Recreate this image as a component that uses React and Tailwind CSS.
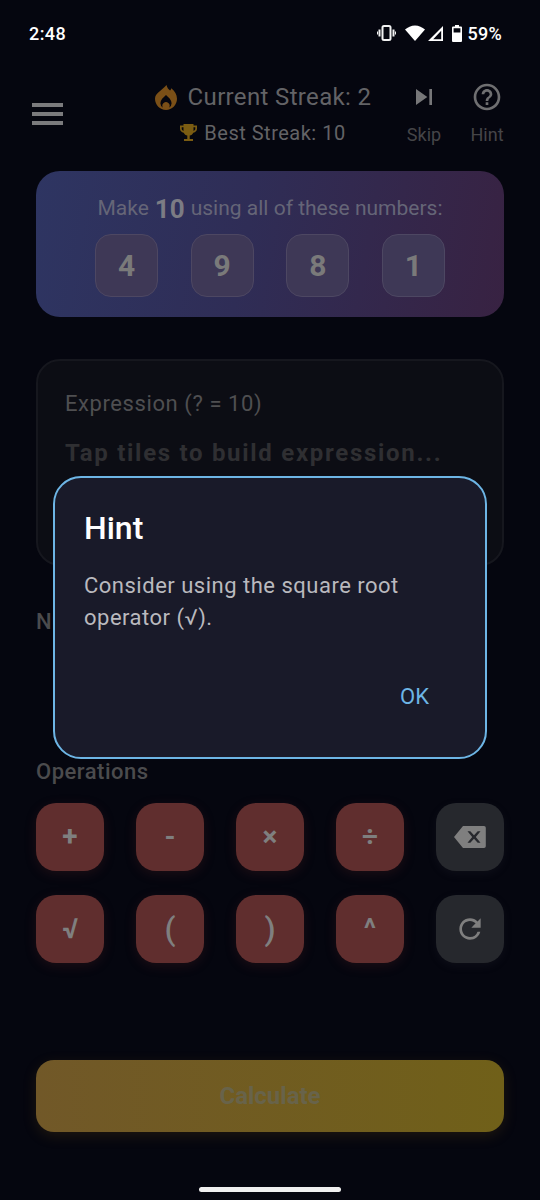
import React from "react";

const Tile = ({ children, gray }) => (
  <div className={`w-[68px] h-[68px] rounded-[20px] flex items-center justify-center text-[28px] font-bold text-[#7f7f7f] ${gray ? "bg-[#26282d] shadow-[0_3px_10px_rgba(70,70,80,0.12)]" : "bg-[#602e2e] shadow-[0_3px_12px_rgba(110,40,40,0.22)]"}`}>
    {children}
  </div>
);

const Num = ({ children }) => (
  <div className="w-[63px] h-[63px] rounded-[16px] border border-[#4d4762] bg-[#3e3856] flex items-center justify-center text-[30px] font-bold text-[#7a7a7a]">
    {children}
  </div>
);

export default function App() {
  return (
    <div className="relative w-[540px] h-[1200px] overflow-hidden bg-[#05060f] font-['Roboto',sans-serif]">
      {/* status bar */}
      <div className="h-[66px] pl-[29px] pr-[38px] flex items-center justify-between text-white">
        <span className="text-[18px] font-medium tracking-[0.4px]">2:48</span>
        <div className="flex items-center">
          <svg width="19" height="16" viewBox="0 0 19 16" className="mr-[9px]" fill="none" stroke="#f2f2f2">
            <rect x="5.5" y="1" width="8" height="14" rx="1.5" strokeWidth="2" />
            <path d="M2.5 4.5v7M16.5 4.5v7" strokeWidth="2" />
            <path d="M0.5 6.5v3M18.5 6.5v3" strokeWidth="1" />
          </svg>
          <svg width="20" height="16" viewBox="0 0 20 16" className="mr-[2px]">
            <path d="M0 4.6C2.7 2 6.2.4 10 .4s7.3 1.600 10 4.200L10 16z" fill="#fff" />
          </svg>
          <svg width="17" height="17" viewBox="0 0 17 17" className="mr-[8px]">
            <path d="M16 1v15H1z M14.200 5.800L6.200 14.200h8z" fill="#fff" fillRule="evenodd" />
          </svg>
          <svg width="10" height="17" viewBox="0 0 10 17" className="mr-[5px]">
            <path d="M3 0h4v1.500h2a1 1 0 0 1 1 1V16a1 1 0 0 1-1 1H1a1 1 0 0 1-1-1V2.500a1 1 0 0 1 1-1h2z M1.600 3.200v4.300h6.800V3.200z" fill="#fff" fillRule="evenodd" />
          </svg>
          <span className="text-[18px] font-medium tracking-[0.3px]">59%</span>
        </div>
      </div>

      {/* header */}
      <div className="h-[105px] pl-[32px] pr-[36px] flex items-start">
        <div className="mt-[37px] w-[31px] flex flex-col gap-[5.5px]">
          <div className="h-[3.5px] bg-[#7b7b7d]" />
          <div className="h-[3.5px] bg-[#7b7b7d]" />
          <div className="h-[3.5px] bg-[#7b7b7d]" />
        </div>
        <div className="w-[280px] ml-[60px] mt-[16px] flex flex-col items-center">
          <div className="flex items-center h-[30px]">
            <svg width="22" height="25" viewBox="0 0 22 25" className="mr-[11px]">
              <path fillRule="evenodd" fill="#7a4f17" d="M11.500 0c.8 3 2 4.400 3.600 5.400.6-.6 1-1.300 1.200-2.100C19.800 6 22 9.800 22 13.800 22 20 17 25 11 25S0 20 0 13.800C0 8 6.500 6 11.500 0zM11 10c-2.800 2.500-5.600 5-5.600 8.200a5.600 5.600 0 0 0 2.600 4.600 3.600 3.600 0 1 1 6 0 5.600 5.600 0 0 0 2.600-4.600C16.600 15 13.800 12.500 11 10z" />
            </svg>
            <span className="text-[24px] text-[#636366] tracking-[0.35px]">Current Streak: 2</span>
          </div>
          <div className="flex items-center h-[28px] mt-[7px]">
            <svg width="17" height="18" viewBox="0 0 17 18" className="mr-[7px]">
              <path fillRule="evenodd" fill="#7b5c12" d="M3.500 0h10v1.500H17v3.300c0 2-1.500 3.600-3.700 3.900-.7 1.500-2 2.600-3.600 2.900V15H13v2H4v-2h3.300v-3.400c-1.600-.3-2.900-1.400-3.600-2.900C1.500 8.400 0 6.800 0 4.800V1.500h3.500zM1.700 3.200v1.600c0 1 .7 1.900 1.800 2.200V3.200zM13.500 3.200V7c1.100-.3 1.800-1.200 1.800-2.200V3.200z" />
            </svg>
            <span className="text-[20px] text-[#636366] tracking-[0.5px]">Best Streak: 10</span>
          </div>
        </div>
        <div className="ml-[3px] w-[36px] mt-[15px] flex flex-col items-center">
          <svg width="32" height="32" viewBox="0 0 24 24">
            <path d="M6 18l8.500-6L6 6v12zM16 6v12h2V6h-2z" fill="#777779" />
          </svg>
          <span className="mt-[10px] text-[18px] leading-[24px] text-[#454548]">Skip</span>
        </div>
        <div className="ml-[28px] w-[34px] mt-[15px] flex flex-col items-center">
          <svg width="32" height="32" viewBox="0 0 24 24">
            <path d="M11 18h2v-2h-2v2zm1-16C6.480 2 2 6.480 2 12s4.480 10 10 10 10-4.480 10-10S17.520 2 12 2zm0 18c-4.410 0-8-3.590-8-8s3.590-8 8-8 8 3.590 8 8-3.590 8-8 8zm0-14c-2.210 0-4 1.790-4 4h2c0-1.100.9-2 2-2s2 .9 2 2c0 2-3 1.750-3 5h2c0-2.250 3-2.500 3-5 0-2.210-1.790-4-4-4z" fill="#6f6f71" />
          </svg>
          <span className="mt-[10px] text-[18px] leading-[24px] text-[#454548]">Hint</span>
        </div>
      </div>

      <div className="px-[36px]">
        {/* target card */}
        <div className="h-[146px] rounded-[24px] bg-[linear-gradient(100deg,#2e3562_0%,#2f2d56_45%,#382242_100%)] pt-[20px] flex flex-col items-center">
          <div className="h-[36px] flex items-center text-[21px] text-[#656577]">
            <span>Make</span>
            <span className="mx-[6px] text-[26px] font-bold text-[#7c7c84]">10</span>
            <span>using all of these numbers:</span>
          </div>
          <div className="mt-[7px] flex gap-[32.6px]">
            <Num>4</Num>
            <Num>9</Num>
            <Num>8</Num>
            <Num>1</Num>
          </div>
        </div>

        {/* expression card */}
        <div className="mt-[42px] h-[207px] rounded-[24px] border-2 border-[#16171e] bg-[#0c0d14] pl-[27px] pt-[29px]">
          <div className="text-[22px] leading-[28px] tracking-[0.58px] text-[#4f4f51]">Expression (? = 10)</div>
          <div className="mt-[21px] text-[24px] leading-[28px] font-bold tracking-[1.7px] text-[#2f2f32]">Tap tiles to build expression...</div>
        </div>

        <div className="mt-[42px] text-[22px] leading-[28px] tracking-[0.5px] text-[#4b4b4d] font-medium">Numbers</div>

        {/* operations */}
        <div className="mt-[122px] text-[22px] leading-[28px] tracking-[0.5px] text-[#4b4b4d] font-medium">Operations</div>
        <div className="mt-[17px] grid grid-cols-5 gap-x-[32px] gap-y-[24px]">
          <Tile>+</Tile>
          <Tile>-</Tile>
          <Tile>×</Tile>
          <Tile>÷</Tile>
          <Tile gray>
            <svg width="32" height="24" viewBox="0 0 32 24">
              <path fillRule="evenodd" fill="#7f7f7f" d="M9 1h21a1.800 1.800 0 0 1 1.800 1.800v18.400A1.800 1.800 0 0 1 30 23H9L0 12zM13.500 6.300L18.200 12l-4.700 5.700h2.800L20 13.800l3.700 3.900h2.800L21.800 12l4.700-5.700h-2.800L20 10.200l-3.700-3.900z" />
            </svg>
          </Tile>
          <Tile>√</Tile>
          <Tile><span className="text-[32px] font-medium">(</span></Tile>
          <Tile><span className="text-[32px] font-medium">)</span></Tile>
          <Tile>^</Tile>
          <Tile gray>
            <svg width="32" height="32" viewBox="0 0 24 24">
              <path fill="#7f7f7f" d="M17.650 6.350A7.958 7.958 0 0 0 12 4c-4.420 0-7.990 3.580-7.990 8s3.570 8 7.990 8c3.730 0 6.840-2.550 7.730-6h-2.080A5.990 5.990 0 0 1 12 18c-3.310 0-6-2.690-6-6s2.690-6 6-6c1.660 0 3.140.69 4.220 1.780L13 11h7V4l-2.350 2.350z" />
            </svg>
          </Tile>
        </div>

        {/* calculate */}
        <div className="mt-[97px] h-[72px] rounded-[18px] bg-[linear-gradient(90deg,#715828,#706019)] shadow-[0_4px_14px_rgba(130,90,20,0.2)] flex items-center justify-center text-[24px] font-bold text-[#68634a]">
          Calculate
        </div>
      </div>

      {/* home indicator */}
      <div className="absolute left-[199px] top-[1187px] w-[142px] h-[5px] rounded-full bg-[#f0f0f0]" />

      {/* dialog */}
      <div className="absolute left-[53px] top-[476px] w-[434px] h-[283px] rounded-[28px] border-[2.5px] border-[#6db5e5] bg-[#191a29] pl-[29px] pr-[24px] pt-[29px]">
        <div className="text-[32px] leading-[42px] font-medium text-white">Hint</div>
        <div className="mt-[21px] text-[22px] leading-[32px] tracking-[0.5px] text-[#b9b9be]">
          Consider using the square root<br />operator (√).
        </div>
        <div className="absolute right-[56px] top-[205px] text-[22px] leading-[28px] text-[#6db5e5]">OK</div>
      </div>
    </div>
  );
}
